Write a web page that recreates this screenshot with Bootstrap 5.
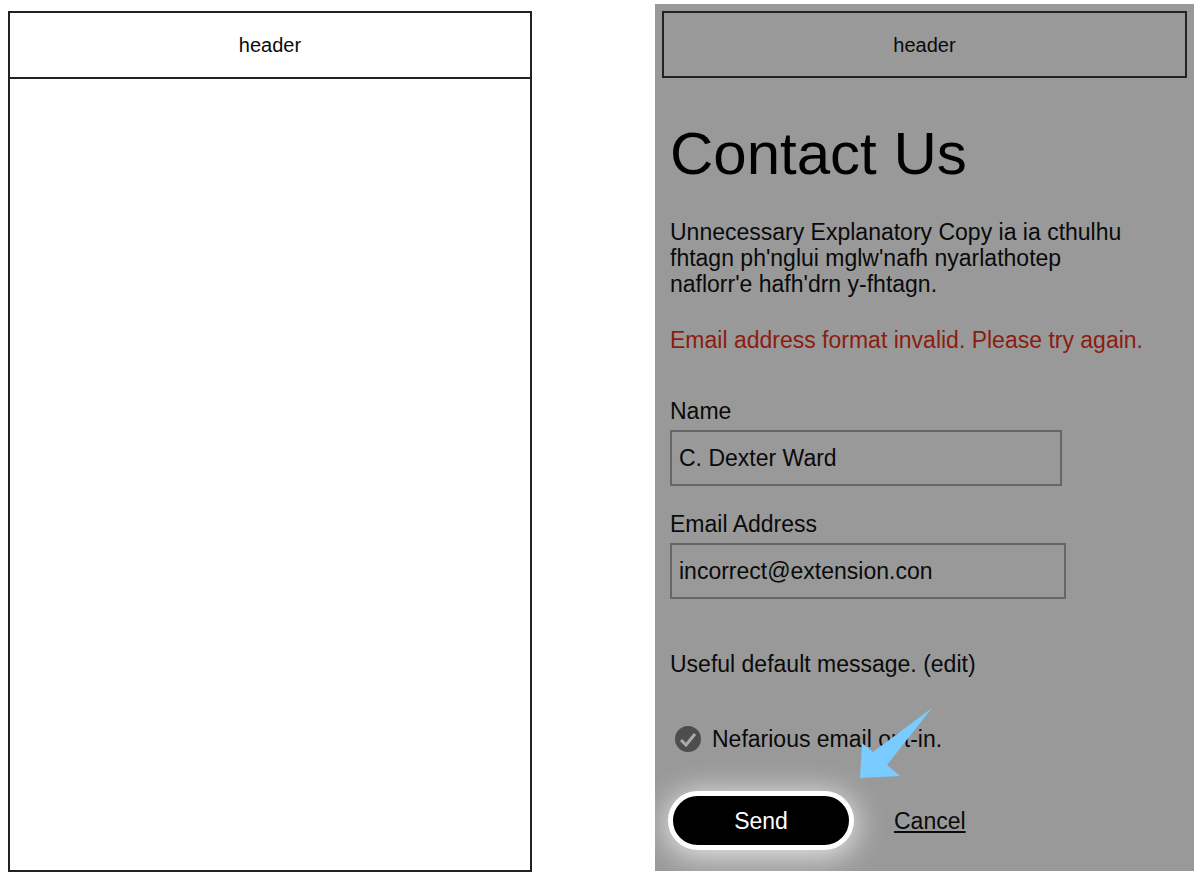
<!DOCTYPE html>
<html lang="en">
<head>
<meta charset="utf-8">
<meta name="viewport" content="width=device-width, initial-scale=1">
<title>Contact Us</title>
<link href="https://cdn.jsdelivr.net/npm/bootstrap@5.3.0/dist/css/bootstrap.min.css" rel="stylesheet">
<style>
  body { font-family: "Liberation Sans", Arial, sans-serif; font-size: 23px; line-height: 26px; color: #0a0a0a; background: #fff; }
  .board { display: grid; grid-template-columns: 524fr 539fr; column-gap: 123px; padding: 4px 6px 8px 8px; }
  .blank-screen { margin-top: 7px; border: 2px solid #222; }
  .screen-header { height: 67px; font-size: 20px; }
  .blank-screen .screen-header { height: 66px; border-bottom: 2px solid #222; }
  .dim-screen { background: #999; padding: 7px; margin-bottom: 1px; }
  .dim-screen .screen-header { border: 2px solid #222; }
  .screen-body { padding: 40px 8px 14px; }
  .screen-title { font-size: 60px; line-height: 72px; margin-bottom: 29px; font-weight: 400; color: #000; }
  .intro { margin-bottom: 30px; padding-right: 44px; }
  .error-text { color: #8c1c10; margin-bottom: 45px; }
  .form-label { margin-bottom: 6px; }
  .field { margin-bottom: 25px; }
  .field .form-control { height: 56px; max-width: 392px; padding: 0 7px; font-size: 23px; border: 2px solid #666; border-radius: 0; background: transparent; color: #0a0a0a; }
  .field .email-input { max-width: 396px; }
  .default-message { margin: 52px 0 49px; }
  .default-message a, .cancel-link { color: #0a0a0a; }
  .opt-in { gap: 11px; padding-left: 5px; margin-bottom: 39px; }
  .opt-in .form-check-input { width: 26px; height: 26px; margin: 0; border: 0; border-radius: 50%; }
  .opt-in .form-check-input:checked { background: #4d4d4d url("data:image/svg+xml,%3Csvg xmlns='http://www.w3.org/2000/svg' viewBox='0 0 26 26'%3E%3Cpath d='M6 14l5 5L20 8' fill='none' stroke='%23aaa' stroke-width='3'/%3E%3C/svg%3E") center / 26px no-repeat; }
  .actions { gap: 40px; }
  .send-btn { width: 186px; height: 59px; margin-left: -2px; padding: 2px 0 0; font-size: 23px; color: #fff; background: #000; border: 5px solid #fff; border-radius: 30px; box-shadow: 0 4px 30px 3px rgba(255,255,255,.75); }
  .send-btn:hover, .send-btn:active { background: #222; color: #fff; }
  .pointer { left: 190px; bottom: 71px; width: 72px; height: 71px; pointer-events: none; }
</style>
</head>
<body>
<main class="board">
  <section class="blank-screen">
    <header class="screen-header d-flex align-items-center justify-content-center">header</header>
  </section>

  <section class="dim-screen overflow-hidden">
    <header class="screen-header d-flex align-items-center justify-content-center">header</header>
    <form class="screen-body">
      <h1 class="screen-title">Contact Us</h1>
      <p class="intro">Unnecessary Explanatory Copy ia ia cthulhu fhtagn ph'nglui mglw'nafh nyarlathotep naflorr'e hafh'drn y-fhtagn.</p>
      <p class="error-text" role="alert">Email address format invalid. Please try again.</p>
      <div class="field">
        <label class="form-label d-block" for="name">Name</label>
        <input class="form-control" id="name" type="text" value="C. Dexter Ward">
      </div>
      <div class="field">
        <label class="form-label d-block" for="email">Email Address</label>
        <input class="form-control email-input" id="email" type="email" value="incorrect@extension.con">
      </div>
      <p class="default-message">Useful default message. <a class="text-decoration-none" href="#">(edit)</a></p>
      <div class="opt-in d-flex align-items-center">
        <input class="form-check-input" id="optin" type="checkbox" checked>
        <label for="optin">Nefarious email opt-in.</label>
      </div>
      <div class="actions d-flex align-items-center position-relative">
        <button class="btn send-btn" type="button">Send</button>
        <a class="cancel-link" href="#">Cancel</a>
        <svg class="pointer position-absolute" viewBox="0 0 72 71" aria-hidden="true">
          <path fill="#7acbff" d="M72 0L27 57L40 68L0 70L2 35L13 44L33 29Z"/>
        </svg>
      </div>
    </form>
  </section>
</main>
<script src="https://cdn.jsdelivr.net/npm/bootstrap@5.3.0/dist/js/bootstrap.bundle.min.js"></script>
</body>
</html>
